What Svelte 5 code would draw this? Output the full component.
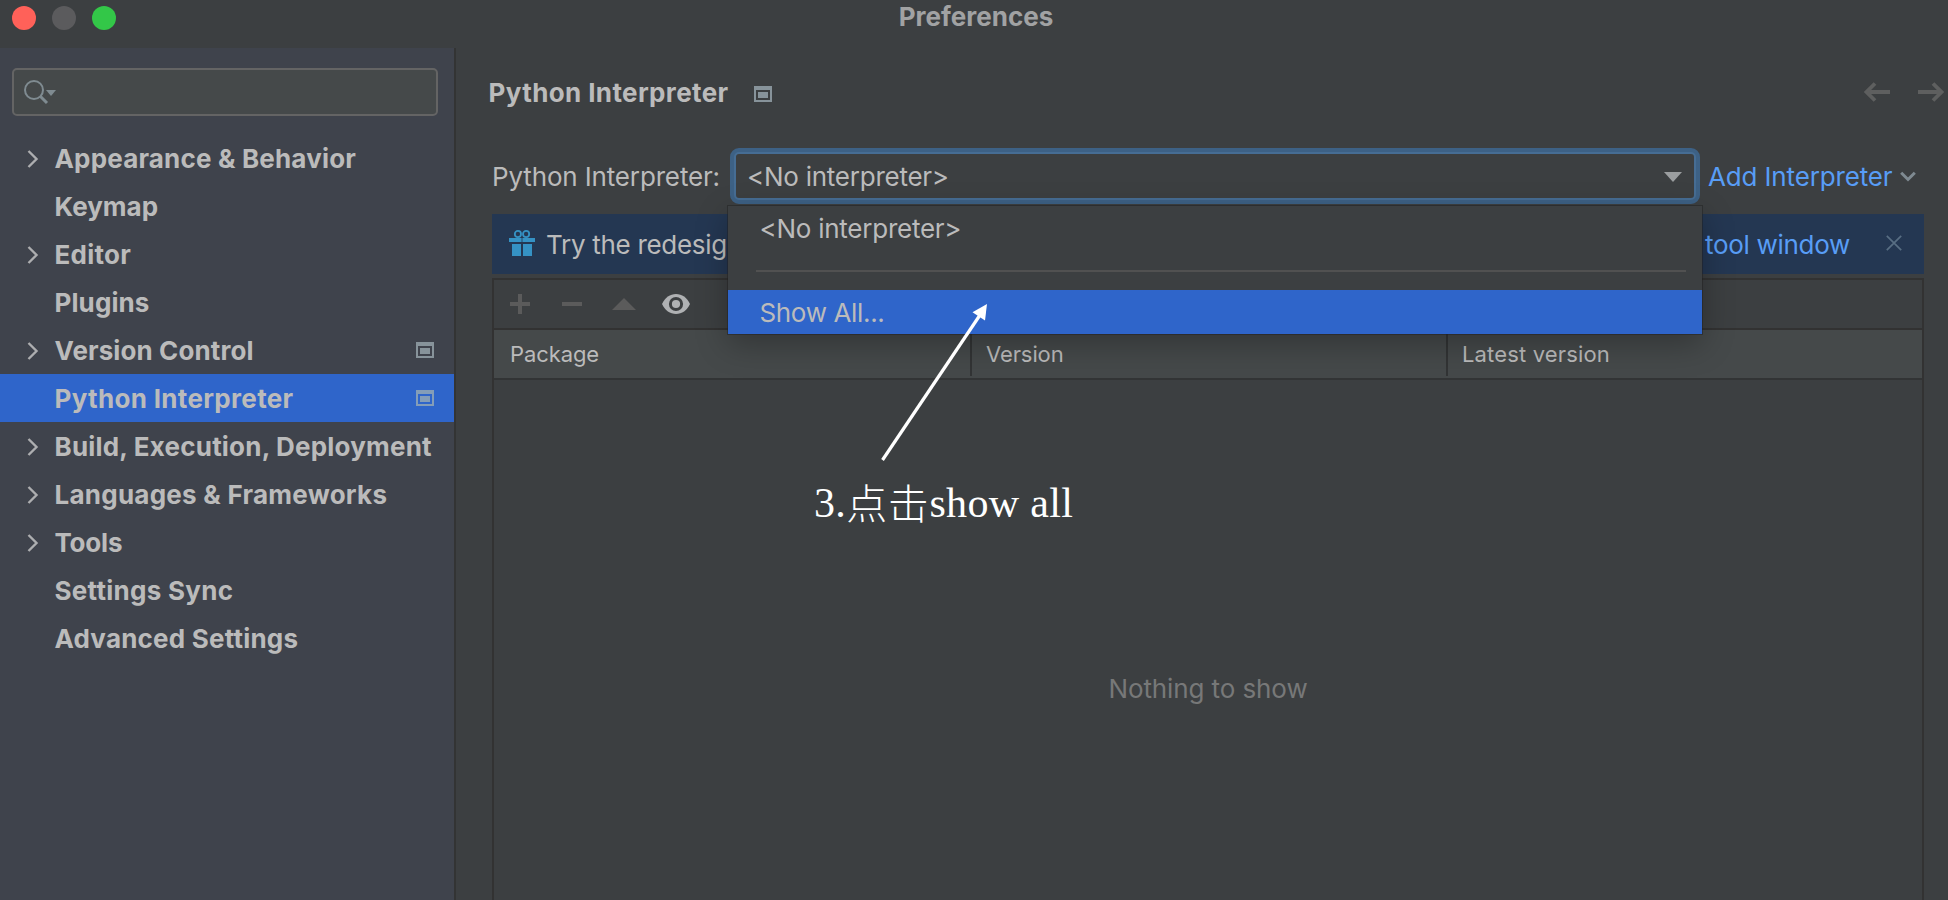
<script lang="ts">
  type Item = { name: string; expandable?: boolean; project?: boolean; selected?: boolean; tracking: number };

  const items: Item[] = [
    { name: 'Appearance & Behavior', expandable: true, tracking: 0.18 },
    { name: 'Keymap', tracking: 0 },
    { name: 'Editor', expandable: true, tracking: 0.25 },
    { name: 'Plugins', tracking: 0.1 },
    { name: 'Version Control', expandable: true, project: true, tracking: 0.1 },
    { name: 'Python Interpreter', project: true, selected: true, tracking: 0.32 },
    { name: 'Build, Execution, Deployment', expandable: true, tracking: 0.2 },
    { name: 'Languages & Frameworks', expandable: true, tracking: 0.25 },
    { name: 'Tools', expandable: true, tracking: -0.2 },
    { name: 'Settings Sync', tracking: 0.28 },
    { name: 'Advanced Settings', tracking: 0.2 }
  ];
  const columns = ['Package', 'Version', 'Latest version'];
</script>

{#snippet projectIcon()}
  <svg class="project" width="18" height="16" viewBox="0 0 18 16" shape-rendering="crispEdges">
    <path fill-rule="evenodd" d="M0 0h18v16H0zM2 4v10h14V4zM4 6h10v6H4z" />
  </svg>
{/snippet}

<div class="window">
  <header class="titlebar">
    <div class="lights"><i class="red"></i><i class="grey"></i><i class="green"></i></div>
    <span class="title">Preferences</span>
  </header>

  <div class="content">
    <aside>
      <div class="search">
        <svg width="36" height="28" viewBox="0 0 36 28" fill="none" stroke="#7f8b91">
          <circle cx="12" cy="12" r="9" stroke-width="2" />
          <path d="M18.5 18.5l6.5 6.5" stroke-width="3" />
          <path d="M24 12h10l-5 6z" fill="#7f8b91" stroke="none" />
        </svg>
      </div>
      <nav>
        {#each items as item}
          <div class="row" class:selected={item.selected}>
            <span class="chev">
              {#if item.expandable}
                <svg width="12" height="18" viewBox="0 0 12 18" fill="none" stroke="#adaeb0" stroke-width="2.4">
                  <path d="M1.5 1l8 8-8 8" />
                </svg>
              {/if}
            </span>
            <span class="name" style="letter-spacing:{item.tracking}px">{item.name}</span>
            {#if item.project}{@render projectIcon()}{/if}
          </div>
        {/each}
      </nav>
    </aside>

    <main>
      <div class="heading">
        <h1>Python Interpreter</h1>
        {@render projectIcon()}
        <div class="history">
          <svg width="26" height="20" viewBox="0 0 26 20" fill="none" stroke="#5e5f5f">
            <path d="M3 10h23" stroke-width="4" /><path d="M11 1.5L2.5 10l8.5 8.5" stroke-width="3.8" />
          </svg>
          <svg width="26" height="20" viewBox="0 0 26 20" fill="none" stroke="#5e5f5f">
            <path d="M0 10h23" stroke-width="4" /><path d="M15 1.5l8.5 8.5-8.5 8.5" stroke-width="3.8" />
          </svg>
        </div>
      </div>

      <div class="picker">
        <label for="interpreter">Python Interpreter:</label>
        <div class="combo" id="interpreter">
          <div class="field">
            <span>&lt;No interpreter&gt;</span>
            <svg width="18" height="10" viewBox="0 0 18 10"><path d="M0 0h18L9 10z" fill="#9b9ea0" /></svg>
          </div>
          <div class="popup">
            <div class="option">&lt;No interpreter&gt;</div>
            <hr />
            <div class="option active">Show All...</div>
          </div>
        </div>
        <span class="add">Add Interpreter</span>
        <svg class="addchev" width="16" height="12" viewBox="0 0 16 12" fill="none" stroke="#7f8a91" stroke-width="3">
          <path d="M1.2 1.7L8 8.5l6.8-6.8" />
        </svg>
      </div>

      <div class="banner">
        <svg width="26" height="26" viewBox="0 0 26 26" fill="#3592c4">
          <circle cx="8.9" cy="4" r="3.1" fill="none" stroke="#3592c4" stroke-width="1.8" />
          <circle cx="17.1" cy="4" r="3.1" fill="none" stroke="#3592c4" stroke-width="1.8" />
          <path d="M0 8h12.6v4H0zM13.4 8H26v4H13.4zM3 14h9v12H3zM14 14h9v12h-9z" />
        </svg>
        <span class="try">Try the redesig</span>
        <span class="link">tool window</span>
        <svg width="16" height="16" viewBox="0 0 16 16" stroke="#586e83" stroke-width="1.7">
          <path d="M.8.8l14.4 14.4M15.2.8L.8 15.2" />
        </svg>
      </div>

      <section class="packages">
        <div class="toolbar">
          <svg width="20" height="20" viewBox="0 0 20 20" fill="#5b5b5b"><path d="M8 0h4v8h8v4h-8v8H8v-8H0V8h8z" /></svg>
          <svg width="20" height="20" viewBox="0 0 20 20" fill="#5b5b5b"><path d="M0 8h20v4H0z" /></svg>
          <svg width="24" height="20" viewBox="0 0 24 20" fill="#5b5b5b"><path d="M0 16L12 4l12 12z" /></svg>
          <svg width="28" height="20" viewBox="0 0 28 20">
            <path d="M0 10C3 3.5 8 0 14 0s11 3.5 14 10c-3 6.5-8 10-14 10S3 16.5 0 10z" fill="#afb1b3" />
            <circle cx="14" cy="10" r="5.6" fill="#afb1b3" stroke="#3c3f41" stroke-width="3" />
          </svg>
        </div>
        <div class="thead">
          {#each columns as column}<div class="th" class:wide={column === 'Latest version'}><span>{column}</span></div>{/each}
        </div>
        <div class="empty">Nothing to show</div>
      </section>
    </main>
  </div>

  <svg class="pointer" width="112" height="164" viewBox="0 0 112 164">
    <path d="M6.5 160L104 15" stroke="#fff" stroke-width="3.2" />
    <path d="M111 4L96.5 12.3 109 20.5z" fill="#fff" />
  </svg>
  <div class="note">3.<span>点击</span>show all</div>
</div>

<style>
  :global(body) { margin: 0; background: #3c3f41; }
  .window {
    position: relative;
    width: 1948px;
    height: 900px;
    overflow: hidden;
    display: flex;
    flex-direction: column;
    background: #3c3f41;
    color: #bbb;
    font: 400 26px/58px Inter, sans-serif;
    white-space: nowrap;
  }
  svg { display: block; flex: none; }
  .titlebar { display: grid; grid-template-columns: 1fr auto 1fr; height: 48px; }
  .lights { display: flex; gap: 16px; padding: 6px 0 0 12px; }
  .lights i { width: 24px; height: 24px; border-radius: 50%; }
  .red { background: #ff6159; }
  .grey { background: #5b5b5d; }
  .green { background: #33c748; }
  .title { grid-column: 2; margin-left: 4px; font-weight: 700; line-height: 34px; color: #a1a2a3; }
  .content { flex: 1; display: flex; min-height: 0; }

  aside { box-sizing: border-box; width: 456px; border-right: 2px solid #333434; background: #3f434c; padding-top: 20px; }
  .search {
    box-sizing: border-box;
    width: 426px;
    height: 48px;
    margin-left: 12px;
    padding: 8px 0 0 8px;
    border: 2px solid #646464;
    border-radius: 5px;
    background: #45494a;
  }
  nav { padding-top: 18px; }
  .row { display: flex; align-items: center; height: 48px; padding: 0 20px 0 26.5px; font-weight: 700; }
  .chev { width: 28px; padding-top: 2px; }
  .name { flex: 1; line-height: 48px; padding-top: 2px; }
  .selected { background: #2f65ca; }
  .project { fill: #87939a; }
  .selected .project { fill: #849db8; }

  main { flex: 1; min-width: 0; }
  .heading { display: flex; align-items: center; height: 50px; padding: 20px 4px 30px 32.5px; }
  h1 { margin: 0 25px 0 0; font-size: 26px; font-weight: 700; line-height: 50px; letter-spacing: 0.38px; }
  .heading .project { margin-top: 2px; }
  .history { display: flex; gap: 28px; margin: -2px 0 0 auto; }

  .picker { display: flex; height: 56px; padding-left: 36px; }
  label { width: 238px; letter-spacing: -0.15px; }
  .combo {
    position: relative;
    box-sizing: border-box;
    width: 970px;
    height: 56px;
    border: 4px solid #3d6185;
    border-radius: 9px;
    background: #3d6185;
  }
  .field {
    box-sizing: border-box;
    display: flex;
    align-items: center;
    justify-content: space-between;
    height: 48px;
    padding: 0 12px 0 11px;
    border: 2px solid #466d94;
    border-radius: 5px;
    background: #3c3f41;
    line-height: 46px;
    letter-spacing: -0.25px;
  }
  .field span { padding-top: 1px; }
  .field svg { margin-top: 1px; }
  .popup {
    position: absolute;
    z-index: 2;
    left: -6px;
    top: 54px;
    box-sizing: border-box;
    width: 974px;
    height: 128px;
    padding-top: 4px;
    background: #3c3f41;
    box-shadow: 0 0 0 1px rgba(30, 30, 30, 0.45), 0 10px 30px rgba(0, 0, 0, 0.28);
  }
  .option { padding-left: 31.5px; height: 60px; line-height: 38px; letter-spacing: -0.25px; }
  hr { height: 2px; margin: 0 16px 18px 28px; border: 0; background: #515151; }
  .active { height: 44px; line-height: 46px; background: #2f65ca; letter-spacing: -0.35px; }
  .add { padding-left: 8px; color: #589df6; letter-spacing: -0.15px; }
  .addchev { margin: 23px 0 0 8px; }

  .banner {
    display: flex;
    align-items: center;
    box-sizing: border-box;
    width: 1432px;
    height: 60px;
    margin: 10px 0 4px 36px;
    padding: 0 22px 0 17px;
    background: #243752;
    line-height: 58px;
  }
  .banner svg { margin-top: -2px; }
  .try { margin-left: 11px; letter-spacing: -0.3px; padding-top: 2px; }
  .link { margin: 0 36px 0 auto; color: #589df6; letter-spacing: -0.3px; padding-top: 2px; }

  .packages { box-sizing: border-box; width: 1432px; height: 630px; margin-left: 36px; border: 2px solid #323232; }
  .toolbar { display: flex; align-items: center; height: 48px; padding-left: 16px; border-bottom: 2px solid #323232; }
  .toolbar svg { margin-right: 32px; }
  .toolbar svg:nth-child(2) { margin-right: 30px; }
  .toolbar svg:nth-child(3) { margin-right: 26px; }
  .thead { display: flex; height: 48px; border-bottom: 2px solid #323435; background: #45494a; }
  .th {
    box-sizing: border-box;
    width: 478px;
    height: 46px;
    padding-left: 16px;
    border-right: 2px solid #323435;
    font-size: 22px;
    line-height: 48px;
    letter-spacing: -0.1px;
  }
  .th:nth-child(2) { width: 476px; padding-left: 14px; }
  .th.wide { flex: 1; border: 0; padding-left: 14px; letter-spacing: 0.15px; }
  .empty { padding-top: 292px; text-align: center; line-height: 34px; color: #777878; letter-spacing: -0.1px; }

  .pointer { position: absolute; z-index: 3; left: 876px; top: 300px; }
  .note {
    position: absolute;
    left: 814px;
    top: 474px;
    color: #fff;
    font: 400 42px/58px 'Liberation Serif', serif;
    letter-spacing: 0.35px;
  }
  .note span {
    position: relative;
    top: 2px;
    font: 300 41px/40px 'Noto Sans CJK SC', sans-serif;
    letter-spacing: 0.6px;
  }
</style>
